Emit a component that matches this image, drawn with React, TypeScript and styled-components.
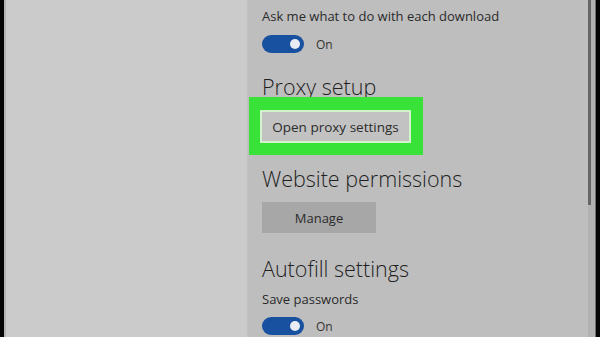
import React from 'react';
import styled, { createGlobalStyle } from 'styled-components';

const GlobalStyle = createGlobalStyle`
    html, body {
        margin: 0;
        padding: 0;
        width: 600px;
        height: 337px;
        overflow: hidden;
        background: #000;
    }
    #root {
        width: 600px;
        height: 337px;
    }
`;

const Toggle: React.FC<ToggleProps> = ({ label }) => {
    return (
        <ToggleRow>
            <Track>
                <Knob />
            </Track>
            <ToggleLabel>{label}</ToggleLabel>
        </ToggleRow>
    );
};

const App: React.FC = () => {
    return (
        <Screen>
            <GlobalStyle />
            <EdgeLeft />
            <SidePane />
            <SettingsPane>
                <Content>
                    <Label>Ask me what to do with each download</Label>
                    <Spacer size={12} />
                    <Toggle label={'On'} />
                    <Spacer size={23} />
                    <Heading>Proxy setup</Heading>
                    <Highlight>
                        <ProxyButton>Open proxy settings</ProxyButton>
                    </Highlight>
                    <Spacer size={13} />
                    <Heading>Website permissions</Heading>
                    <Spacer size={13} />
                    <ManageButton>Manage</ManageButton>
                    <Spacer size={25} />
                    <Heading>Autofill settings</Heading>
                    <Spacer size={14} />
                    <Label>Save passwords</Label>
                    <Spacer size={11} />
                    <Toggle label={'On'} />
                </Content>
                <ScrollTrack>
                    <ScrollThumb />
                </ScrollTrack>
            </SettingsPane>
            <EdgeRight />
        </Screen>
    );
};

export default App;

const Screen = styled.div`
    display: flex;
    width: 600px;
    height: 337px;
    font-family: 'Open Sans', 'Noto Sans', sans-serif;
    color: #2b2b2b;
`;

const EdgeLeft = styled.div`
    width: 4px;
    background: #050505;
    border-right: 2px solid #b3b3b3;
`;

const SidePane = styled.div`
    width: 241px;
    background: #cbcbcb;
    border-right: 1px solid #c1c1c1;
`;

const SettingsPane = styled.div`
    flex: 1;
    display: flex;
    background: #bebebe;
`;

const Content = styled.div`
    flex: 1;
    display: flex;
    flex-direction: column;
    align-items: flex-start;
    padding: 10px 0 0 14px;
`;

const Spacer = styled.div<{ size: number }>`
    height: ${(p) => p.size}px;
    flex-shrink: 0;
`;

const Label = styled.div`
    font-size: 13px;
    line-height: 13px;
    color: #2a2a2a;
    white-space: nowrap;
`;

const Heading = styled.div`
    font-size: 21.5px;
    line-height: 21px;
    font-weight: 300;
    color: #1f1f1f;
    white-space: nowrap;
`;

const ToggleRow = styled.div`
    display: flex;
    align-items: center;
    gap: 12px;
`;

const Track = styled.div`
    width: 42px;
    height: 18px;
    border-radius: 9px;
    background: #17519f;
    display: flex;
    align-items: center;
    justify-content: flex-end;
    padding-right: 4px;
    box-sizing: border-box;
`;

const Knob = styled.div`
    width: 10px;
    height: 10px;
    border-radius: 50%;
    background: #e9ecf3;
`;

const ToggleLabel = styled.span`
    font-size: 12px;
    color: #333;
`;

const Highlight = styled.div`
    margin-left: -13px;
    padding: 13px 12px 12px 11px;
    background: #38e238;
`;

const ProxyButton = styled.div`
    width: 151px;
    height: 33px;
    box-sizing: border-box;
    border: 2px solid #d2f3cb;
    background: #c2c2c2;
    display: flex;
    align-items: center;
    justify-content: center;
    font-size: 13.5px;
    color: #2b2b2b;
`;

const ManageButton = styled.div`
    width: 114px;
    height: 31px;
    background: #a7a7a7;
    display: flex;
    align-items: center;
    justify-content: center;
    font-size: 13px;
    color: #2b2b2b;
`;

const ScrollTrack = styled.div`
    width: 8px;
    background: #b2b2b2;
    border-right: 1px solid #6f6f6f;
    box-sizing: border-box;
`;

const ScrollThumb = styled.div`
    width: 3px;
    height: 205px;
    background: #666;
`;

const EdgeRight = styled.div`
    width: 4px;
    background: #050505;
`;

interface ToggleProps {
    label: string;
}
